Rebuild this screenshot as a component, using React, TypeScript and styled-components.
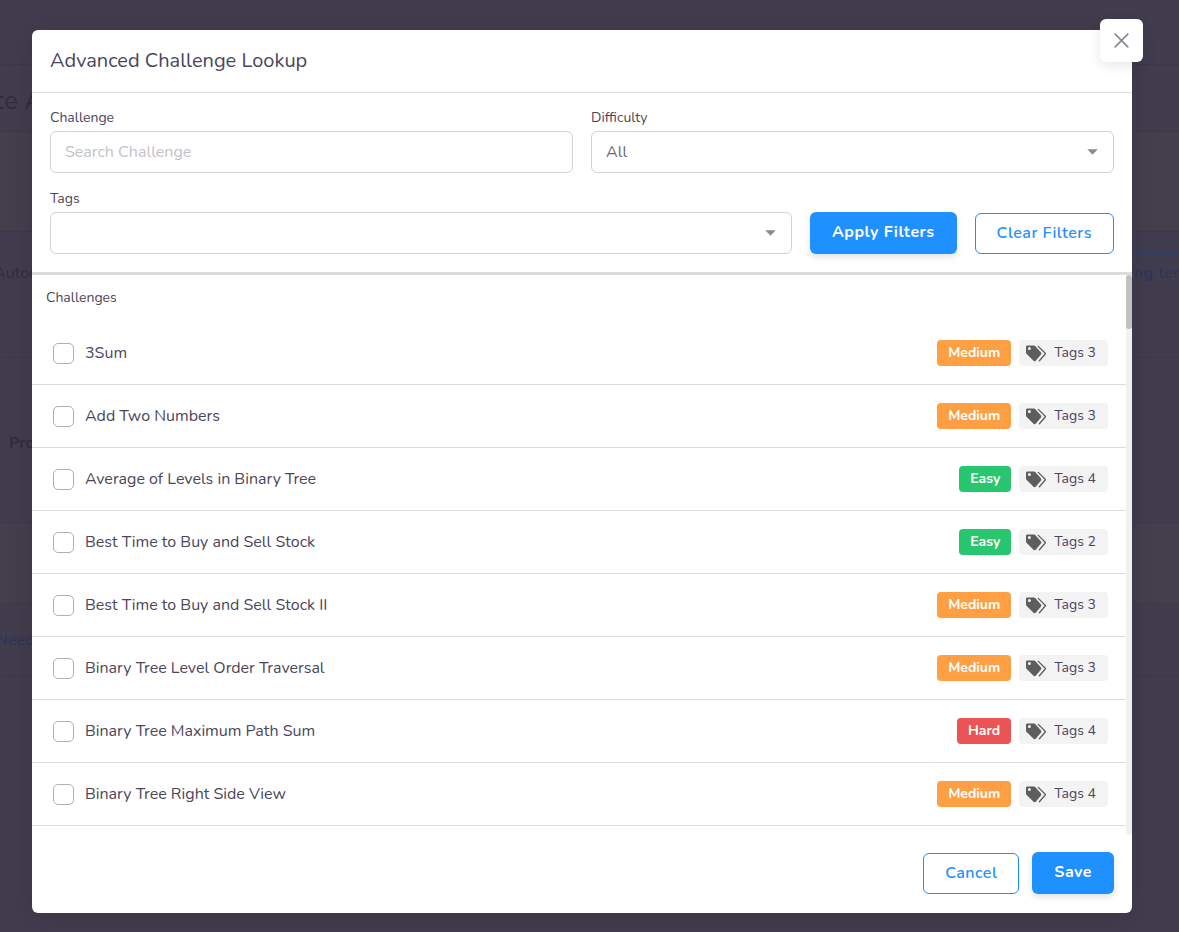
import React from "react";
import styled, { createGlobalStyle } from "styled-components";

const GlobalStyle = createGlobalStyle`
  *, *::before, *::after { box-sizing: border-box; }
  body {
    margin: 0;
    background: #423d4e;
    color: #4b465c;
    font: 400 16px/24px Nunito, "Open Sans", sans-serif;
  }
  button, input, select { font: inherit; }
`;

const Screen = styled.div`
  position: relative;
  min-height: 100vh;
  overflow: hidden;
`;

/* Dimmed page that stays behind the dialog */
const Behind = styled.div`
  position: absolute;
  inset: 0;
  display: flex;
  flex-direction: column;
  color: #312d3c;
`;

const Band = styled.div<{ $height: number; $shade?: string; $top?: number }>`
  display: flex;
  align-items: ${(p) => (p.$top ? "flex-start" : "center")};
  justify-content: space-between;
  flex: none;
  height: ${(p) => p.$height}px;
  padding-top: ${(p) => p.$top ?? 0}px;
  border-bottom: 1px solid #3d3949;
  background: ${(p) => p.$shade ?? "transparent"};
`;

const BehindText = styled.span<{ $size?: number; $weight?: number; $color?: string; $indent: number }>`
  margin-left: ${(p) => p.$indent}px;
  font-size: ${(p) => p.$size ?? 16}px;
  font-weight: ${(p) => p.$weight ?? 400};
  line-height: 42px;
  color: ${(p) => p.$color ?? "inherit"};
  white-space: nowrap;
`;

const BehindButton = styled.span`
  width: 64px;
  height: 42px;
  padding-left: 18px;
  border: 1px solid #2b4170;
  border-right: 0;
  color: #2e3659;
  font-weight: 600;
  letter-spacing: 0.4px;
  line-height: 40px;
  white-space: nowrap;
`;

const Overlay = styled.div`
  position: relative;
  padding: 30px 47px 20px 32px;
`;

const Dialog = styled.section`
  position: relative;
  max-width: 1100px;
  margin: 0 auto;
  border-radius: 6px;
  background: #fff;
  box-shadow: 0 4px 24px rgba(34, 30, 48, 0.24);
`;

const CloseButton = styled.button`
  position: absolute;
  top: -11px;
  right: -11px;
  display: grid;
  place-items: center;
  width: 43px;
  height: 43px;
  padding: 0;
  border: 0;
  border-radius: 6px;
  background: #fff;
  color: #8b8994;
  box-shadow: 0 4px 12px rgba(34, 41, 47, 0.1);
`;

const Header = styled.header`
  padding: 17px 18px;
  border-bottom: 1px solid #dcdcdf;
`;

const Title = styled.h1`
  margin: 0;
  font-size: 20px;
  font-weight: 400;
  line-height: 28px;
`;

const Filters = styled.form`
  display: grid;
  gap: 15px;
  padding: 14px 18px 18px;
  border-bottom: 3px solid #dcdcdf;
`;

const FilterRow = styled.div`
  display: flex;
  align-items: flex-end;
  gap: 18px;
`;

const Field = styled.div`
  display: grid;
  flex: 1;
  gap: 3px;
`;

const Label = styled.label`
  font-size: 14px;
  line-height: 21px;
`;

const controlStyle = `
  width: 100%;
  height: 42px;
  padding: 0 14px;
  border: 1px solid #d3d2d7;
  border-radius: 6px;
  background: #fff;
  color: #6e6b7b;
`;

const TextInput = styled.input`
  ${controlStyle}
  &::placeholder { color: #c3c2c8; opacity: 1; }
`;

const SelectBox = styled.div`
  display: grid;
  align-items: center;
  > * { grid-area: 1 / 1; }
  > svg { justify-self: end; margin-right: 16px; pointer-events: none; }
`;

const Select = styled.select`
  ${controlStyle}
  appearance: none;
`;

const Button = styled.button<{ $primary?: boolean }>`
  flex: none;
  height: ${(p) => (p.$primary ? 42 : 41)}px;
  padding: 0 ${(p) => (p.$primary ? 22 : 21)}px 2px;
  border: ${(p) => (p.$primary ? "0" : "1px solid #1e90ff")};
  border-radius: 6px;
  background: ${(p) => (p.$primary ? "#1e90ff" : "#fff")};
  color: ${(p) => (p.$primary ? "#fff" : "#1e90ff")};
  font-weight: ${(p) => (p.$primary ? 700 : 600)};
  letter-spacing: 0.5px;
  box-shadow: ${(p) => (p.$primary ? "0 3px 6px rgba(34, 41, 47, 0.14)" : "none")};
`;

const ListArea = styled.div`
  display: grid;
  grid-template-columns: minmax(0, 1fr) 6px;
`;

const Track = styled.div`
  border-radius: 4px;
  background: #f1f1f1;
`;

const Thumb = styled.div`
  height: 54px;
  border-radius: 4px;
  background: #c1c1c1;
`;

const ListTitle = styled.h2`
  margin: 0;
  padding: 12px 14px 14px;
  font-size: 14px;
  font-weight: 400;
  line-height: 21px;
`;

const List = styled.ul`
  margin: 0;
  padding: 0 0 9px;
  list-style: none;
`;

const Item = styled.li`
  display: flex;
  align-items: center;
  gap: 8px;
  height: 63px;
  padding: 0 18px 0 21px;
  border-bottom: 1px solid #dcdcdf;
`;

const ItemLabel = styled.label`
  display: flex;
  flex: 1;
  align-items: center;
  gap: 11px;
`;

const Checkbox = styled.input`
  appearance: none;
  flex: none;
  width: 21px;
  height: 21px;
  margin: 0;
  border: 1px solid #b0aeb8;
  border-radius: 5px;
  background: #fff;
  &:checked { background: #1e90ff; }
`;

const levelColor = { Easy: "#28c76f", Medium: "#ff9f43", Hard: "#ea5455" };
type Level = keyof typeof levelColor;

const LevelBadge = styled.span<{ $level: Level }>`
  padding: 0 11px;
  border-radius: 4px;
  background: ${(p) => levelColor[p.$level]};
  color: #fff;
  font-size: 14px;
  font-weight: 700;
  line-height: 26px;
`;

const TagsBadge = styled.span`
  display: flex;
  align-items: center;
  gap: 8px;
  padding: 0 12px 0 7px;
  border-radius: 4px;
  background: #f3f3f3;
  font-size: 14px;
  line-height: 26px;
`;

const Footer = styled.footer`
  display: flex;
  align-items: flex-end;
  justify-content: flex-end;
  gap: 13px;
  padding: 17px 18px 19px;
`;

const Caret = () => (
  <svg width="11" height="6" viewBox="0 0 11 6" aria-hidden="true">
    <path d="M0.3 0.3h10.4L5.5 5.7z" fill="#8b8994" />
  </svg>
);

const CloseIcon = () => (
  <svg width="15" height="15" viewBox="0 0 15 15" fill="none" stroke="currentColor" strokeWidth="1.7" strokeLinecap="round" aria-hidden="true">
    <path d="M1.2 1.200l12.600 12.600M13.800 1.200L1.200 13.800" />
  </svg>
);

const TagsIcon = () => (
  <svg width="20" height="17" viewBox="0 0 20 17" fill="none" stroke="#5d5d5d" strokeLinecap="round" strokeLinejoin="round" aria-hidden="true">
    <path
      d="M1.4.5H8c.5 0 .9.2 1.200.5l5.600 6.200c.700.800.700 1.700 0 2.500l-5.100 6.100c-.500.600-1.300.600-1.900.100L.700 9C.300 8.600 0 8.100 0 7.500V1.900C0 1.100.600.500 1.400.500zM3.400 2.100a1.500 1.500 0 1 0 0 3 1.500 1.500 0 0 0 0-3z"
      fill="#5d5d5d"
      fillRule="evenodd"
      stroke="none"
    />
    <path d="M12.300 1.400l6.700 6.600c.400.400.400.900 0 1.300l-5.600 6.400" strokeWidth="1.300" />
  </svg>
);

const challenges: { name: string; level: Level; tags: number }[] = [
  { name: "3Sum", level: "Medium", tags: 3 },
  { name: "Add Two Numbers", level: "Medium", tags: 3 },
  { name: "Average of Levels in Binary Tree", level: "Easy", tags: 4 },
  { name: "Best Time to Buy and Sell Stock", level: "Easy", tags: 2 },
  { name: "Best Time to Buy and Sell Stock II", level: "Medium", tags: 3 },
  { name: "Binary Tree Level Order Traversal", level: "Medium", tags: 3 },
  { name: "Binary Tree Maximum Path Sum", level: "Hard", tags: 4 },
  { name: "Binary Tree Right Side View", level: "Medium", tags: 4 },
];

export default function App() {
  return (
    <Screen>
      <GlobalStyle />
      <Behind aria-hidden="true">
        <Band $height={65} />
        <Band $height={67} $top={15}>
          <BehindText $indent={-5} $size={26}>te A</BehindText>
        </Band>
        <Band $height={100} $shade="#433f4d" />
        <Band $height={126} $top={20}>
          <BehindText $indent={-6}>Autom</BehindText>
          <BehindButton>ng ter</BehindButton>
        </Band>
        <Band $height={165} $top={64}>
          <BehindText $indent={9} $weight={700}>Pro</BehindText>
        </Band>
        <Band $height={81} $shade="#433f4d" />
        <Band $height={73}>
          <BehindText $indent={-4} $weight={600} $color="#2e3659">Need</BehindText>
        </Band>
      </Behind>

      <Overlay>
        <Dialog role="dialog" aria-labelledby="dialog-title">
          <CloseButton type="button" aria-label="Close"><CloseIcon /></CloseButton>
          <Header>
            <Title id="dialog-title">Advanced Challenge Lookup</Title>
          </Header>

          <Filters onSubmit={(e) => e.preventDefault()}>
            <FilterRow>
              <Field>
                <Label htmlFor="challenge">Challenge</Label>
                <TextInput id="challenge" type="text" placeholder="Search Challenge" />
              </Field>
              <Field>
                <Label htmlFor="difficulty">Difficulty</Label>
                <SelectBox>
                  <Select id="difficulty" defaultValue="All"><option>All</option></Select>
                  <Caret />
                </SelectBox>
              </Field>
            </FilterRow>
            <FilterRow>
              <Field>
                <Label htmlFor="tags">Tags</Label>
                <SelectBox>
                  <Select id="tags" />
                  <Caret />
                </SelectBox>
              </Field>
              <Button $primary type="submit">Apply Filters</Button>
              <Button type="reset">Clear Filters</Button>
            </FilterRow>
          </Filters>

          <ListArea>
            <div>
              <ListTitle>Challenges</ListTitle>
              <List>
                {challenges.map((c) => (
                  <Item key={c.name}>
                    <ItemLabel>
                      <Checkbox type="checkbox" />
                      {c.name}
                    </ItemLabel>
                    <LevelBadge $level={c.level}>{c.level}</LevelBadge>
                    <TagsBadge><TagsIcon />Tags {c.tags}</TagsBadge>
                  </Item>
                ))}
              </List>
            </div>
            <Track><Thumb /></Track>
          </ListArea>

          <Footer>
            <Button type="button">Cancel</Button>
            <Button $primary type="button">Save</Button>
          </Footer>
        </Dialog>
      </Overlay>
    </Screen>
  );
}
